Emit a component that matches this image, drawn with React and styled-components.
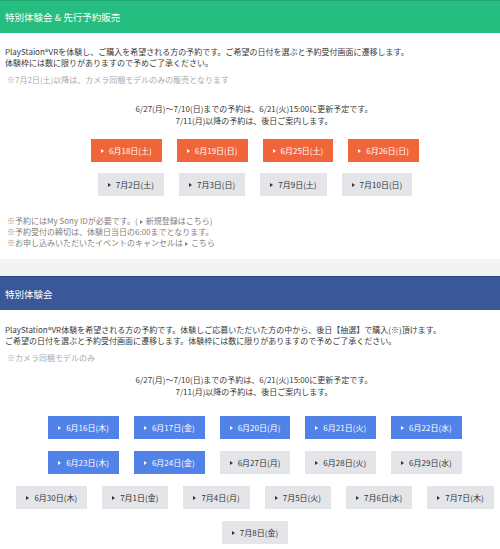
import styled, { createGlobalStyle } from "styled-components";

const GlobalStyle = createGlobalStyle`
  html, body {
    margin: 0;
    padding: 0;
    overflow: hidden;
    background: #f2f3f5;
  }
  body {
    font-family: "Noto Sans CJK JP", "Liberation Sans", sans-serif;
    font-size: 8px;
    color: #3a3a3a;
  }
`;

const Page = styled.div`
  width: 500px;
  display: flex;
  flex-direction: column;
  gap: 17px;
`;

const Section = styled.section`
  background: #fff;
  padding-bottom: 11px;
`;

const Header = styled.h2`
  margin: 0;
  height: ${(p) => p.$height}px;
  display: flex;
  align-items: center;
  padding-left: 5px;
  font-size: 9.5px;
  font-weight: normal;
  color: #fff;
  background: ${(p) => p.$bg};
  border-top: 1px solid ${(p) => p.$line};
  box-sizing: border-box;
`;

const Body = styled.div`
  padding: ${(p) => p.$top}px 5px 0;
`;

const Lead = styled.p`
  margin: 0;
  line-height: 11px;
  white-space: nowrap;
`;

const Note = styled.p`
  margin: 6px 0 0 2px;
  line-height: 11px;
  color: #aaa;
`;

const Schedule = styled.div`
  margin-top: ${(p) => p.$top}px;
  padding-left: 8px;
  text-align: center;
  line-height: 12px;
`;

const Rows = styled.div`
  margin-top: ${(p) => p.$top}px;
  padding-left: 10px;
  display: flex;
  flex-direction: column;
  gap: ${(p) => p.$gap}px;
`;

const Row = styled.div`
  display: flex;
  justify-content: center;
  gap: 15px;
`;

const colors = {
  orange: { bg: "#f1653a", fg: "#fff" },
  blue: { bg: "#5182e8", fg: "#fff" },
  gray: { bg: "#e3e5e9", fg: "#333" },
};

const DateButton = styled.a`
  display: flex;
  align-items: center;
  height: 23px;
  padding: 0 10px;
  white-space: nowrap;
  background: ${(p) => colors[p.$kind].bg};
  color: ${(p) => colors[p.$kind].fg};
  cursor: pointer;
`;

const Arrow = styled.span`
  display: inline-block;
  width: 0;
  height: 0;
  border-left: 3px solid currentColor;
  border-top: 2.5px solid transparent;
  border-bottom: 2.5px solid transparent;
  margin: 0 ${(p) => p.$gap ?? 5}px 0 ${(p) => p.$left ?? 0}px;
  vertical-align: 0;
`;

const Notes = styled.div`
  margin-top: 19px;
  padding-left: 2px;
  line-height: 11px;
  color: #808080;

  & p {
    margin: 0;
  }
`;

const trialRows = [
  [
    ["6月18日(土)", "orange"],
    ["6月19日(日)", "orange"],
    ["6月25日(土)", "orange"],
    ["6月26日(日)", "orange"],
  ],
  [
    ["7月2日(土)", "gray"],
    ["7月3日(日)", "gray"],
    ["7月9日(土)", "gray"],
    ["7月10日(日)", "gray"],
  ],
];

const eventRows = [
  [
    ["6月16日(木)", "blue"],
    ["6月17日(金)", "blue"],
    ["6月20日(月)", "blue"],
    ["6月21日(火)", "blue"],
    ["6月22日(水)", "blue"],
  ],
  [
    ["6月23日(木)", "blue"],
    ["6月24日(金)", "blue"],
    ["6月27日(月)", "gray"],
    ["6月28日(火)", "gray"],
    ["6月29日(水)", "gray"],
  ],
  [
    ["6月30日(木)", "gray"],
    ["7月1日(金)", "gray"],
    ["7月4日(月)", "gray"],
    ["7月5日(火)", "gray"],
    ["7月6日(水)", "gray"],
    ["7月7日(木)", "gray"],
  ],
  [["7月8日(金)", "gray"]],
];

const DateRows = ({ rows, gap, top }) => (
  <Rows $gap={gap} $top={top}>
    {rows.map((row, i) => (
      <Row key={i}>
        {row.map(([label, kind]) => (
          <DateButton key={label} $kind={kind}>
            <Arrow />
            {label}
          </DateButton>
        ))}
      </Row>
    ))}
  </Rows>
);

const ScheduleText = ({ top }) => (
  <Schedule $top={top}>
    6/27(月)～7/10(日)までの予約は、6/21(火)15:00に更新予定です。
    <br />
    7/11(月)以降の予約は、後日ご案内します。
  </Schedule>
);

const App = () => {
  return (
    <Page>
      <GlobalStyle />
      <Section>
        <Header $height={33} $bg="#26bd81" $line="#1fa872">
          特別体験会 &amp; 先行予約販売
        </Header>
        <Body $top={13}>
          <Lead>
            PlayStaion®VRを体験し、ご購入を希望される方の予約です。ご希望の日付を選ぶと予約受付画面に遷移します。
          </Lead>
          <Lead>体験枠には数に限りがありますので予めご了承ください。</Lead>
          <Note>※7月2日(土)以降は、カメラ同梱モデルのみの販売となります</Note>
          <ScheduleText top={18} />
          <DateRows rows={trialRows} gap={11} top={12} />
          <Notes>
            <p>
              ※予約にはMy Sony IDが必要です。(
              <Arrow $left={2} $gap={3} />
              新規登録はこちら)
            </p>
            <p>※予約受付の締切は、体験日当日の6:00までとなります。</p>
            <p>
              ※お申し込みいただいたイベントのキャンセルは
              <Arrow $left={2} $gap={3} />
              こちら
            </p>
          </Notes>
        </Body>
      </Section>
      <Section>
        <Header $height={34} $bg="#3a5898" $line="#2c4781">
          特別体験会
        </Header>
        <Body $top={14}>
          <Lead>
            PlayStation®VR体験を希望される方の予約です。体験しご応募いただいた方の中から、後日【抽選】で購入(※)頂けます。
          </Lead>
          <Lead>
            ご希望の日付を選ぶと予約受付画面に遷移します。体験枠には数に限りがありますので予めご了承ください。
          </Lead>
          <Note>※カメラ同梱モデルのみ</Note>
          <ScheduleText top={11} />
          <DateRows rows={eventRows} gap={12} top={18} />
        </Body>
      </Section>
    </Page>
  );
};

export default App;
